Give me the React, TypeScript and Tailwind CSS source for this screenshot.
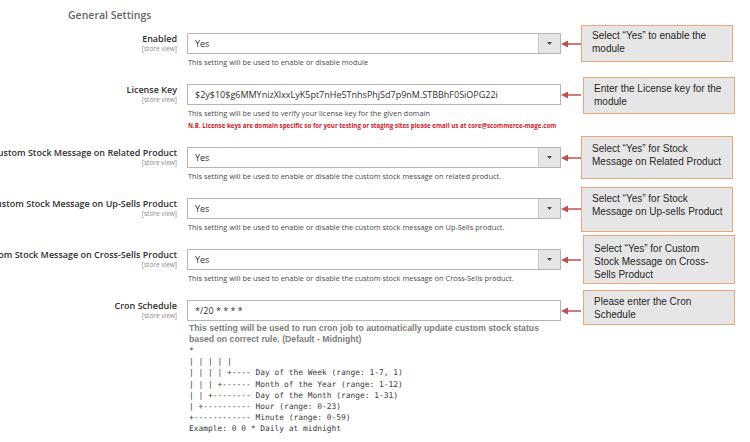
const sans = { fontFamily: '"Open Sans", "Noto Sans", sans-serif' };

type Row = {
  label: string;
  value: string;
  select: boolean;
  hint: string;
  note?: string;
  callout: string[];
  calloutTop: string;
  calloutH: string;
  calloutMl: string;
};

const rows: Row[] = [
  {
    label: "Enabled",
    value: "Yes",
    select: true,
    hint: "This setting will be used to enable or disable module",
    callout: ["Select \u201cYes\u201d to enable the", "module"],
    calloutTop: "mt-[-8px]",
    calloutH: "h-[37px] pt-[3px]",
    calloutMl: "ml-0",
  },
  {
    label: "License Key",
    value: "$2y$10$g6MMYnizXlxxLyK5pt7nHe5TnhsPhjSd7p9nM.STBBhF0SiOPG22i",
    select: false,
    hint: "This setting will be used to verify your license key for the given domain",
    note: "N.B. License keys are domain specific so for your testing or staging sites please email us at core@scommerce-mage.com",
    callout: ["Enter the License key for the", "module"],
    calloutTop: "mt-[-7px]",
    calloutH: "h-[37px] pt-[4px]",
    calloutMl: "ml-[2px]",
  },
  {
    label: "Custom Stock Message on Related Product",
    value: "Yes",
    select: true,
    hint: "This setting will be used to enable or disable the custom stock message on related product.",
    callout: ["Select \u201cYes\u201d for Stock", "Message on Related Product"],
    calloutTop: "mt-[-11px]",
    calloutH: "h-[43px] pt-[5px]",
    calloutMl: "ml-0",
  },
  {
    label: "Custom Stock Message on Up-Sells Product",
    value: "Yes",
    select: true,
    hint: "This setting will be used to enable or disable the custom stock message on Up-Sells product.",
    callout: ["Select \u201cYes\u201d for Stock", "Message on Up-sells Product"],
    calloutTop: "mt-[-11px]",
    calloutH: "h-[45px] pt-[4px]",
    calloutMl: "ml-0",
  },
  {
    label: "Custom Stock Message on Cross-Sells Product",
    value: "Yes",
    select: true,
    hint: "This setting will be used to enable or disable the custom stock message on Cross-Sells product.",
    callout: ["Select \u201cYes\u201d for Custom", "Stock Message on Cross-", "Sells Product"],
    calloutTop: "mt-[-14px]",
    calloutH: "h-[49px] pt-[6px]",
    calloutMl: "ml-[2px]",
  },
];

function Arrow() {
  return (
    <svg width="20" height="8" viewBox="0 0 20 8" className="shrink-0 self-center">
      <line x1="5" y1="4" x2="20" y2="4" stroke="#c0504d" strokeWidth="1.5" />
      <polygon points="0,4 7,0.6 7,7.4" fill="#c0504d" />
    </svg>
  );
}

function Callout({ lines, cls }: { lines: string[]; cls: string }) {
  return (
    <div
      className={`w-[152px] shrink-0 border border-[#eba67a] bg-[#e6e6e6] pl-[10px] text-[10px] leading-[13px] text-[#262626] ${cls}`}
      style={{ fontFamily: '"Liberation Sans", Arial, sans-serif' }}
    >
      {lines.map((l) => (
        <div key={l} className="whitespace-nowrap">{l}</div>
      ))}
    </div>
  );
}

function Field({ value, select }: { value: string; select: boolean }) {
  return (
    <div className="flex h-full w-[374px] shrink-0 items-stretch border border-[#b5b5b5] bg-white">
      <div className="flex flex-1 items-center overflow-hidden whitespace-nowrap pl-[7px] text-[9px] text-[#303030]">
        {value}
      </div>
      {select && (
        <div className="flex w-[22px] items-center justify-center border-l border-[#c8c8c8] bg-[#e6e6e6]">
          <svg width="5" height="3" viewBox="0 0 5 3">
            <polygon points="0,0 5,0 2.5,3" fill="#514943" />
          </svg>
        </div>
      )}
    </div>
  );
}

function Label({ text }: { text: string }) {
  return (
    <div className="flex w-[177px] shrink-0 flex-col items-end">
      <div className="whitespace-nowrap text-[9px] font-semibold leading-[12px] text-[#303030]">{text}</div>
      <div className="whitespace-nowrap text-[6.5px] leading-[8px] text-[#8a8a8a]">[store view]</div>
    </div>
  );
}

const cronLines = [
  "*",
  "| | | | |",
  "| | | | +---- Day of the Week (range: 1-7, 1)",
  "| | | +------ Month of the Year (range: 1-12)",
  "| | +-------- Day of the Month (range: 1-31)",
  "| +---------- Hour (range: 0-23)",
  "+------------ Minute (range: 0-59)",
  "Example: 0 0 * Daily at midnight",
];

export default function App() {
  return (
    <div className="h-[442px] w-[750px] overflow-hidden bg-white" style={sans}>
      <div className="pl-[68px] pt-[8px] text-[10.5px] font-semibold leading-[14px] text-[#666666]">General Settings</div>
      <div className="mt-[11px] flex flex-col gap-[17px]">
        {rows.map((r) => (
          <div key={r.label} className="flex gap-[10px]">
            <Label text={r.label} />
            <div className="flex flex-col">
              <div className="flex h-[21px] items-start">
                <Field value={r.value} select={r.select} />
                <Arrow />
                <Callout lines={r.callout} cls={`${r.calloutTop} ${r.calloutH} ${r.calloutMl}`} />
              </div>
              <div className="mt-[3px] whitespace-nowrap pl-px text-[7.4px] leading-[10px] text-[#4a4a4a]">{r.hint}</div>
              {r.note && (
                <div className="mt-[4px] whitespace-nowrap pl-px text-[6.2px] font-bold leading-[8px] text-[#d0202a]">{r.note}</div>
              )}
            </div>
          </div>
        ))}
        <div className="flex gap-[10px]">
          <Label text="Cron Schedule" />
          <div className="flex flex-col">
            <div className="flex h-[21px] items-start">
              <Field value="*/20 * * * *" select={false} />
              <Arrow />
              <Callout lines={["Please enter the Cron", "Schedule"]} cls="mt-[-10px] h-[35px] pt-[4px] ml-[2px]" />
            </div>
            <div
              className="mt-[2px] pl-[2px] text-[8.7px] font-bold leading-[11px] text-[#7d7d7d]"
              style={{ fontFamily: '"Liberation Sans", Arial, sans-serif' }}
            >
              <div className="whitespace-nowrap">This setting will be used to run cron job to automatically update custom stock status</div>
              <div className="whitespace-nowrap">based on correct rule. (Default - Midnight)</div>
            </div>
            <div
              className="pl-[2px] text-[7.9px] leading-[11.2px] text-[#3a3a3a]"
              style={{ fontFamily: '"DejaVu Sans Mono", "Liberation Mono", monospace' }}
            >
              {cronLines.map((l) => (
                <div key={l} className="whitespace-pre">{l}</div>
              ))}
            </div>
          </div>
        </div>
      </div>
    </div>
  );
}
